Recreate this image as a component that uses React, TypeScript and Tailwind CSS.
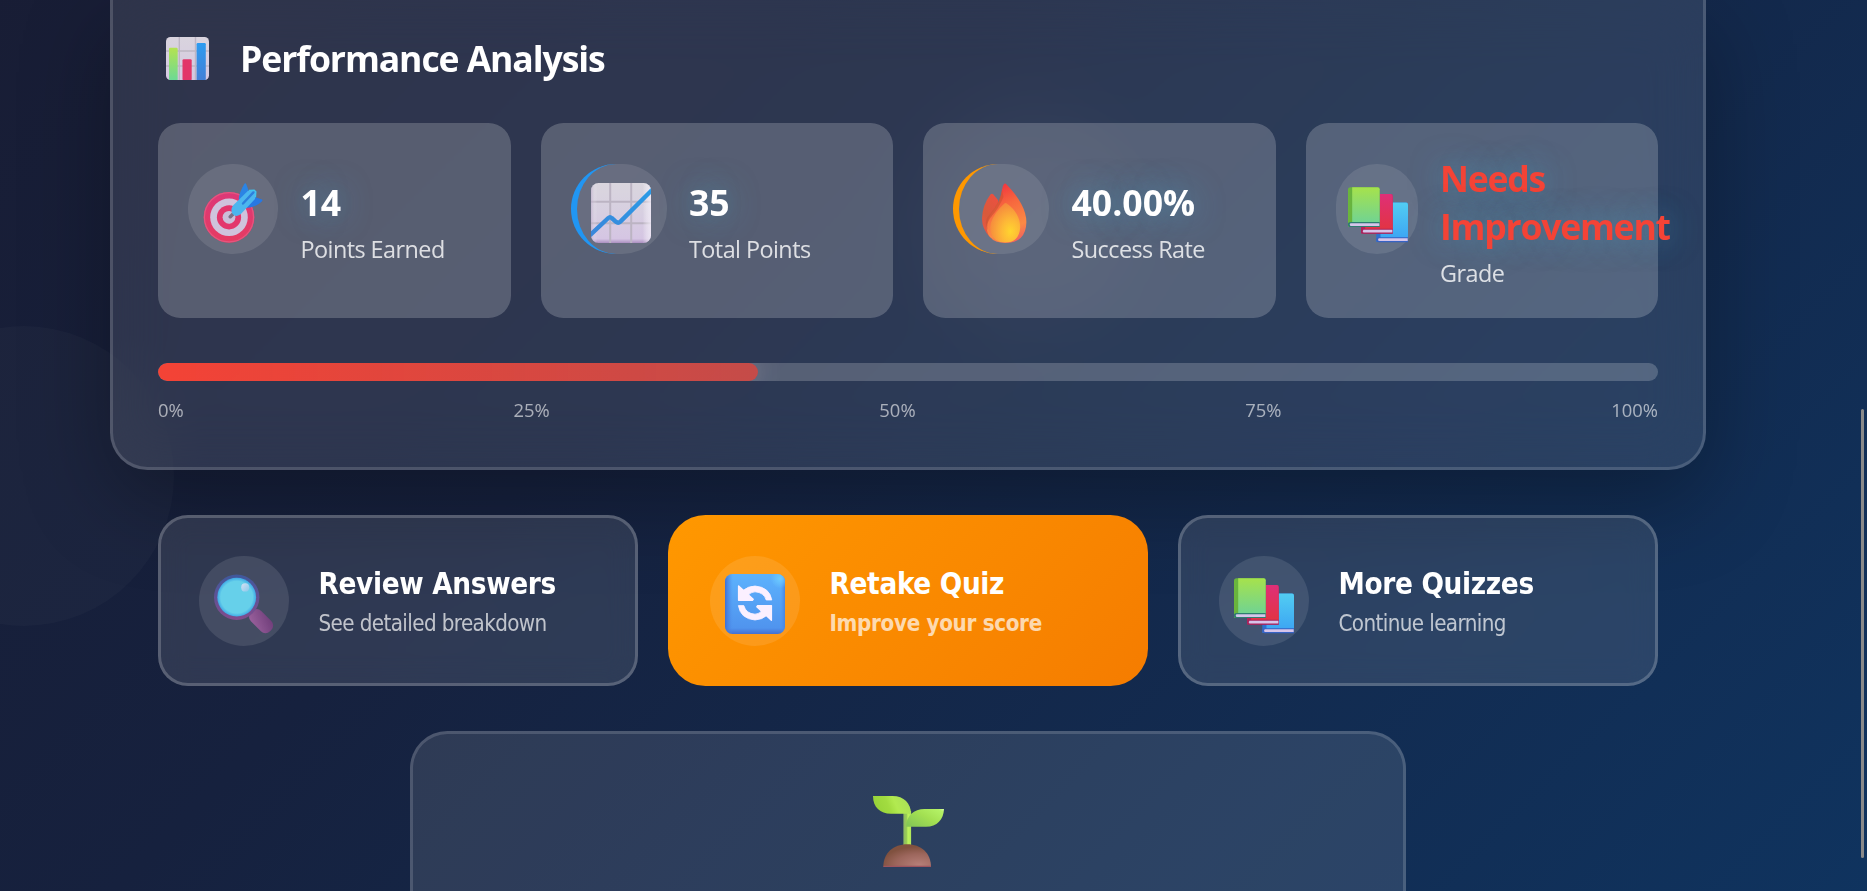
import type { ReactNode } from "react";

function BarChartIcon() {
  return (
    <svg viewBox="0 0 43 43" className="h-[43px] w-[43px] shrink-0">
      <defs>
        <linearGradient id="bcBg" x1="0" y1="0" x2="0" y2="1"><stop stopColor="#d9d4de" /><stop offset="1" stopColor="#d5c8e2" /></linearGradient>
        <linearGradient id="bcG" x1="0" y1="0" x2="0" y2="1"><stop stopColor="#b4e350" /><stop offset="1" stopColor="#6bd996" /></linearGradient>
        <linearGradient id="bcB" x1="0" y1="0" x2="0" y2="1"><stop stopColor="#2c9bf0" /><stop offset="1" stopColor="#447fd6" /></linearGradient>
        <clipPath id="bcClip"><rect width="43" height="43" rx="4.5" /></clipPath>
      </defs>
      <g clipPath="url(#bcClip)">
        <rect width="43" height="43" fill="url(#bcBg)" />
        <path d="M13.3 0V43M29.5 0V43M0 14H43M0 29H43" stroke="#bdb6c4" strokeWidth="1.4" />
        <rect x="3" y="10.7" width="8.7" height="33" rx="1.2" fill="url(#bcG)" />
        <rect x="16.5" y="22.3" width="9.2" height="21" rx="1.2" fill="#e23569" />
        <rect x="30.6" y="6" width="9.2" height="38" rx="1.2" fill="url(#bcB)" />
      </g>
    </svg>
  );
}

function TargetIcon() {
  return (
    <svg viewBox="0 0 60 60" className="h-[60px] w-[60px] shrink-0">
      <defs>
        <linearGradient id="tgR" x1="0" y1="0" x2="0" y2="1"><stop stopColor="#dc3878" /><stop offset="1" stopColor="#e63b61" /></linearGradient>
      </defs>
      <circle cx="26" cy="34.3" r="25.4" fill="url(#tgR)" />
      <circle cx="26" cy="34.3" r="24.6" fill="none" stroke="#e4567f" strokeWidth="1.2" />
      <circle cx="26" cy="34.3" r="18.8" fill="#cfc3dc" />
      <circle cx="26" cy="34.3" r="12.1" fill="#e3366c" />
      <circle cx="26" cy="34.3" r="6.4" fill="#cbbfd9" />
      <path d="M27.3 33.7L33 28" stroke="#7c7288" strokeWidth="3.6" strokeLinecap="round" />
      <path d="M41.6 .4Q42.8 -.2 43.4 1.4L46 8.5L37.5 19L35.8 16Q35.8 10 41.6 .4Z" fill="#2b84e4" />
      <path d="M52 14L58.4 16.2Q60.4 17 58.8 18.4Q53 24.5 42 25L41 21Z" fill="#2878e2" />
      <path d="M50.6 7.5L53 10L52 16L38.6 30.2Q34 35 30.2 31.4Q26.6 27.6 30 22.4L45 7.8Z" fill="#4cb6ee" />
      <path d="M50.4 9.4L40 20.5" stroke="#2d80dc" strokeWidth="2.4" strokeLinecap="round" />
      <path d="M46 7.4L51.2 7.2L52.8 8.8L52.4 14.2" fill="none" stroke="#3fc4f1" strokeWidth="1.4" />
    </svg>
  );
}

function TrendIcon() {
  return (
    <svg viewBox="0 0 60 60" className="mr-px h-[60px] w-[60px] shrink-0">
      <defs>
        <linearGradient id="trBg" x1="0" y1="0" x2="0" y2="1"><stop stopColor="#dad6de" /><stop offset=".5" stopColor="#d7cfe1" /><stop offset=".93" stopColor="#d5c5e3" /><stop offset="1" stopColor="#ab8fc0" /></linearGradient>
        <linearGradient id="trSide" x1="0" y1="0" x2="1" y2="0"><stop stopColor="#b9a9c8" stopOpacity=".6" /><stop offset=".1" stopColor="#fff" stopOpacity="0" /><stop offset=".86" stopColor="#fff" stopOpacity="0" /><stop offset="1" stopColor="#f0eaf6" stopOpacity=".8" /></linearGradient>
        <linearGradient id="trL" x1="0" y1="1" x2="1" y2="0"><stop stopColor="#3b86da" /><stop offset="1" stopColor="#2a9be6" /></linearGradient>
        <clipPath id="trClip"><rect width="60" height="60" rx="7.5" /></clipPath>
      </defs>
      <g clipPath="url(#trClip)">
        <rect width="60" height="60" fill="url(#trBg)" />
        <path d="M19.2 0V60M40.2 0V60M0 18.8H60M0 40.2H60" stroke="#bcb4c3" strokeWidth="2" />
        <rect width="60" height="60" fill="url(#trSide)" />
        <path d="M-2 53.2L17.3 35Q19 33.4 20.7 35L25 38.8Q27.2 40.6 29.4 38.6L62 6" fill="none" stroke="url(#trL)" strokeWidth="4.4" />
      </g>
    </svg>
  );
}

function FireIcon() {
  return (
    <svg viewBox="0 0 60 60" className="h-[60px] w-[60px] shrink-0">
      <defs>
        <linearGradient id="frO" x1=".4" y1="0" x2=".7" y2="1"><stop stopColor="#f2353f" /><stop offset=".35" stopColor="#f7683e" /><stop offset=".75" stopColor="#fb8a45" /><stop offset="1" stopColor="#ef6060" /></linearGradient>
        <linearGradient id="frS" x1=".8" y1="0" x2=".3" y2="1"><stop stopColor="#f04e42" /><stop offset=".6" stopColor="#d85a3a" /><stop offset="1" stopColor="#ea5545" /></linearGradient>
        <radialGradient id="frI" cx=".68" cy=".72" r=".75"><stop stopColor="#ffd52f" /><stop offset=".4" stopColor="#fdb837" /><stop offset="1" stopColor="#f5853e" /></radialGradient>
      </defs>
      <path d="M16.6 11.2Q18 10 19.4 11.4L24 17L30 55Q22 59 15.5 53.5Q8 46 8 35.5Q8.4 22 16.6 11.2Z" fill="url(#frS)" />
      <path d="M30 1Q31.2 0 32.6 1.4Q52.4 22 52.4 39Q52 60 31 60Q13 59 12.6 44Q13.4 35 20 27Q27 17 28 7Q28.6 2.6 30 1Z" fill="url(#frO)" />
      <path d="M29.5 14Q25 25 17 34Q11.5 41 14 48Q10 40 13.6 34Q25 22 28 7Z" fill="#cf5335" opacity=".7" />
      <path d="M30.4 20.4Q31.6 19.4 32.8 20.4Q46.2 30 46.2 44.5Q45 59.6 31 59.6Q17 59 16.2 45Q16.6 33 30.4 20.4Z" fill="url(#frI)" />
    </svg>
  );
}

function Book({ x, y, cover, spine, edge }: { x: number; y: number; cover: string; spine: string; edge: string }) {
  return (
    <g transform={`translate(${x} ${y})`}>
      <path d="M0 2.6Q0 0 2.6 0H29.6Q31.7 0 31.7 2V39.5H0Z" fill={spine} />
      <path d="M4.2 0H29.8Q31.7 0 31.7 2V35.6H4.2Z" fill={cover} />
      <path d="M0 36Q1 34.8 3 34.8H31.7V39.8H2.6Q0 39.8 0 37.4Z" fill={edge} />
      <path d="M2.4 35.9H31.4V38.6H2.4Q1 37.3 2.4 35.9Z" fill="#d6c5ea" />
    </g>
  );
}

function BooksIcon({ id }: { id: string }) {
  return (
    <svg viewBox="0 0 60 60" className="h-[60px] w-[60px] shrink-0">
      <defs>
        <linearGradient id={`${id}g`} x1="0" y1="0" x2="0" y2="1"><stop stopColor="#a6e24c" /><stop offset="1" stopColor="#70d393" /></linearGradient>
        <linearGradient id={`${id}s`} x1="0" y1="0" x2="1" y2="0"><stop stopColor="#6cb63c" /><stop offset="1" stopColor="#3f9b52" /></linearGradient>
        <linearGradient id={`${id}r`} x1="0" y1="0" x2="0" y2="1"><stop stopColor="#df2f78" /><stop offset="1" stopColor="#e23443" /></linearGradient>
        <linearGradient id={`${id}b`} x1="0" y1="0" x2="0" y2="1"><stop stopColor="#52cdf2" /><stop offset="1" stopColor="#3da6f3" /></linearGradient>
      </defs>
      <Book x={28.3} y={19.4} cover={`url(#${id}b)`} spine="#2d71cf" edge="#3763c4" />
      <Book x={13} y={10.9} cover={`url(#${id}r)`} spine="#b7205a" edge="#a9235c" />
      <Book x={0} y={4.3} cover={`url(#${id}g)`} spine={`url(#${id}s)`} edge="#2f7d70" />
    </svg>
  );
}

function MagnifierIcon() {
  return (
    <svg viewBox="0 0 60 60" className="h-[60px] w-[60px] shrink-0">
      <defs>
        <linearGradient id="mgR" x1="0" y1="0" x2="0" y2="1"><stop stopColor="#3f589c" /><stop offset="1" stopColor="#824b8c" /></linearGradient>
        <linearGradient id="mgH" x1="1" y1="0" x2="0.2" y2="1"><stop stopColor="#6d3c78" /><stop offset="1" stopColor="#985f9b" /></linearGradient>
        <radialGradient id="mgL"><stop offset=".82" stopColor="#66d0ea" /><stop offset="1" stopColor="#3fa9e6" /></radialGradient>
        <linearGradient id="mgS" x1="0" y1="0" x2="1" y2="1"><stop stopColor="#d8e0f4" /><stop offset="1" stopColor="#86c8ea" /></linearGradient>
      </defs>
      <rect x="33.5" y="40" width="27" height="14.6" rx="6.4" transform="rotate(45 47.3 47.3)" fill="url(#mgH)" />
      <circle cx="22.7" cy="23.2" r="22.7" fill="url(#mgR)" />
      <circle cx="22.7" cy="23.2" r="19.4" fill="url(#mgL)" />
      <ellipse cx="31.2" cy="13.4" rx="4" ry="4.2" fill="url(#mgS)" />
    </svg>
  );
}

function RefreshIcon() {
  return (
    <svg viewBox="0 0 60 60" className="h-[60px] w-[60px] shrink-0">
      <defs>
        <linearGradient id="rfB" x1="0" y1="0" x2="0" y2="1"><stop stopColor="#5cb2fd" /><stop offset=".9" stopColor="#5094ee" /><stop offset="1" stopColor="#4470d2" /></linearGradient>
        <linearGradient id="rfS" x1="0" y1="0" x2="1" y2="0"><stop stopColor="#3f6fd4" /><stop offset=".13" stopColor="#4b8ae8" stopOpacity="0" /><stop offset=".93" stopColor="#4b8ae8" stopOpacity="0" /><stop offset="1" stopColor="#4886e2" /></linearGradient>
        <radialGradient id="rfC" cx=".92" cy=".08" r=".16"><stop stopColor="#6dcbff" /><stop offset="1" stopColor="#6dcbff" stopOpacity="0" /></radialGradient>
      </defs>
      <rect width="60" height="60" rx="7.5" fill="url(#rfB)" />
      <rect width="60" height="60" rx="7.5" fill="url(#rfS)" />
      <rect width="60" height="60" rx="7.5" fill="url(#rfC)" />
      <g fill="#fbf0ff" stroke="#fbf0ff" strokeLinejoin="round">
        <path d="M13.6 12L28.2 25.2L27.4 26.2H13.6Z" strokeWidth="1.4" />
        <path d="M46.4 46.2L31.8 32.8L32.6 31.6H46.4Z" strokeWidth="1.4" />
        <path d="M17.6 16.8Q23 12.2 30 12Q44.6 13.2 46.8 26H41.2Q39 18.4 30 17.8Q25.6 18 22.8 21.6Z" strokeWidth=".8" />
        <path d="M42.4 41Q37 45.8 30 46Q15.4 44.8 13.4 31.6H18.8Q21 39.6 30 40.2Q34.4 40 37.2 36.4Z" strokeWidth=".8" />
      </g>
    </svg>
  );
}

function SproutIcon() {
  return (
    <svg viewBox="0 0 71 71" className="h-[71px] w-[71px] shrink-0">
      <defs>
        <linearGradient id="spL" x1="0" y1=".6" x2="1" y2=".4"><stop stopColor="#96d238" /><stop offset=".4" stopColor="#a2dc40" /><stop offset=".6" stopColor="#b2ea50" /><stop offset="1" stopColor="#aadf58" /></linearGradient>
        <linearGradient id="spR" x1="0" y1=".8" x2="1" y2="0"><stop stopColor="#86c855" /><stop offset=".5" stopColor="#a3e052" /><stop offset=".9" stopColor="#b4f266" /><stop offset="1" stopColor="#dcffa8" /></linearGradient>
        <linearGradient id="spS" x1="0" y1="0" x2="1" y2="0"><stop stopColor="#8cb862" /><stop offset=".4" stopColor="#98cc55" /><stop offset=".6" stopColor="#bdf35c" /><stop offset="1" stopColor="#b0e65a" /></linearGradient>
        <radialGradient id="spD" cx=".75" cy=".9" r=".8"><stop stopColor="#b67f78" /><stop offset=".6" stopColor="#9c665c" /><stop offset="1" stopColor="#80513f" /></radialGradient>
      </defs>
      <rect x="30.4" y="15" width="7.7" height="35" fill="url(#spS)" />
      <path d="M0 0H19.5C31 0 38 7.5 38 17.8H18C7 17.8 0 11 0 0Z" fill="url(#spL)" />
      <path d="M33 30.8C33 20 41 13 51.5 13H71C70.6 23.5 64 30.8 53 30.8Z" fill="url(#spR)" />
      <path d="M10.3 71C10.3 57 20.5 48.3 34.2 48.3S58 57 58 71Z" fill="url(#spD)" />
      <path d="M10.5 70.4H58" stroke="#9d5560" strokeWidth="1.2" />
    </svg>
  );
}

interface StatProps {
  icon: ReactNode;
  value: ReactNode;
  label: string;
  circle: string;
  text: string;
  valueClass?: string;
}

function Stat({ icon, value, label, circle, text, valueClass = "text-white" }: StatProps) {
  return (
    <div className="flex h-[195px] min-w-0 items-start rounded-[22.5px] bg-white/20 pl-[30px]">
      <div className={`mt-[41px] flex h-[90px] shrink-0 items-center justify-center rounded-full bg-white/10 pt-[7px] ${circle}`}>{icon}</div>
      <div className={`ml-[22.5px] ${text}`}>
        <div className={`text-[35.6px] leading-[48px] font-bold [text-shadow:0_0_30px_rgba(70,180,220,0.5)] ${valueClass}`}>{value}</div>
        <div className="mt-[7px] text-[23.4px] leading-[32px] tracking-[-0.55px] whitespace-nowrap text-white/80">{label}</div>
      </div>
    </div>
  );
}

interface ActionProps {
  icon: ReactNode;
  title: string;
  sub: string;
  box: string;
  subClass: string;
}

function Action({ icon, title, sub, box, subClass }: ActionProps) {
  return (
    <button className={`relative flex h-[171px] items-center text-left font-['DejaVu_Sans_Condensed','DejaVu_Sans',sans-serif] ${box}`}>
      <span className="flex h-[90px] w-[90px] shrink-0 items-center justify-center rounded-full bg-white/10 pt-[7px]">{icon}</span>
      <span className="ml-[29.5px] flex flex-col pt-[2px] whitespace-nowrap">
        <span className="text-[29.4px] leading-[36px] font-bold tracking-[-0.35px] text-white">{title}</span>
        <span className={`mt-[7px] leading-[28px] ${subClass}`}>{sub}</span>
      </span>
    </button>
  );
}

const marks = ["0%", "25%", "50%", "75%", "100%"];

export default function App() {
  return (
    <div className="relative h-[891px] w-full overflow-hidden bg-[#16213e] bg-[linear-gradient(135deg,#1a1a2e_0%,#16213e_50%,#0f3460_100%)] bg-[length:1867px_1768px] bg-[position:0px_-811px] bg-no-repeat font-['Open_Sans','Noto_Sans',sans-serif]">
      <div className="absolute top-[326px] left-[-126px] h-[300px] w-[300px] rounded-full bg-white/[0.025]" />
      <div className="absolute top-[110px] left-[920px] h-[220px] w-[220px] rounded-full bg-white/[0.03] blur-[12px]" />

      <main className="relative ml-[110px] w-[1596px]">
        <section className="h-[470px] rounded-b-[37.5px] border-x-[3px] border-b-[3px] border-white/15 bg-white/10 px-[45px] pt-[34px] shadow-[0_30px_90px_rgba(0,0,0,0.3)] backdrop-blur-[30px]">
          <div className="flex h-[48px] items-center pl-[8px]">
            <BarChartIcon />
            <h2 className="-mt-px ml-[31px] text-[35.6px] leading-[48px] font-bold tracking-[-1.1px] whitespace-nowrap text-white">Performance Analysis</h2>
          </div>
          <div className="mt-[41px] grid grid-cols-4 gap-[30px]">
            <Stat icon={<TargetIcon />} value="14" label="Points Earned" circle="w-[90px]" text="pt-[55px]" />
            <Stat icon={<TrendIcon />} value="35" label="Total Points" circle="w-[96px] border-l-[6px] border-[#2196f3]" text="pt-[55px]" />
            <Stat icon={<FireIcon />} value="40.00%" label="Success Rate" circle="w-[96px] border-l-[6px] border-[#ff9800]" text="pt-[55px]" />
            <Stat icon={<BooksIcon id="gr" />} value={<>Needs<br />Improvement</>} label="Grade" circle="w-[82px] pl-[2px]" text="pt-[31px]" valueClass="tracking-[-1.25px] text-[#f44336]" />
          </div>
          <div className="mt-[45px] h-[18px] overflow-hidden rounded-full bg-white/20">
            <div className="h-full w-2/5 rounded-full bg-[linear-gradient(90deg,#f44336,rgba(244,67,54,0.7))] shadow-[0_0_30px_rgba(255,255,255,0.3)]" />
          </div>
          <div className="mt-[16px] flex justify-between text-[18.4px] leading-[25px] text-white/60">
            {marks.map((m) => <span key={m}>{m}</span>)}
          </div>
        </section>

        <div className="mt-[45px] grid grid-cols-3 gap-[30px] px-[48px]">
          <Action icon={<MagnifierIcon />} title="Review Answers" sub="See detailed breakdown" box="rounded-[30px] border-[3px] border-white/20 bg-white/[0.11] pl-[38px] backdrop-blur-[15px]" subClass="text-[22.2px] tracking-[-0.6px] text-white/70" />
          <Action icon={<RefreshIcon />} title="Retake Quiz" sub="Improve your score" box="rounded-[37.5px] bg-[linear-gradient(135deg,#ff9800,#f57c00)] pl-[42px]" subClass="text-[22.2px] font-bold tracking-[-0.32px] text-white/70" />
          <Action icon={<BooksIcon id="mq" />} title="More Quizzes" sub="Continue learning" box="rounded-[30px] border-[3px] border-white/20 bg-white/[0.11] pl-[38px] backdrop-blur-[15px]" subClass="text-[22.2px] tracking-[-0.6px] text-white/70" />
        </div>

        <section className="mx-auto mt-[45px] flex h-[300px] w-[996px] justify-center rounded-[37.5px] border-[3px] border-white/15 bg-white/[0.11] pt-[62px]">
          <SproutIcon />
        </section>
      </main>

      <div className="absolute top-[409px] right-[3px] h-[449px] w-[3px] rounded-full bg-[#8a8a8a]" />
    </div>
  );
}
